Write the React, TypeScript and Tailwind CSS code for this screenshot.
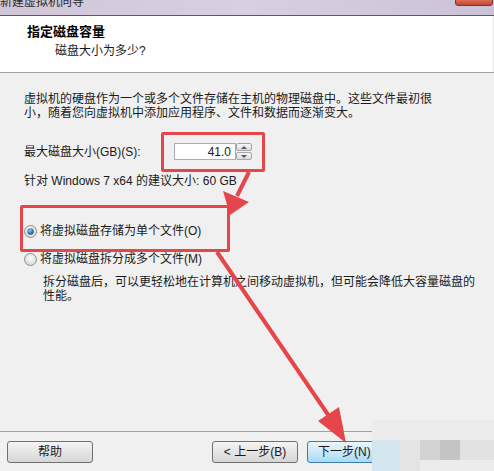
import React from "react";

const font = { fontFamily: '"Liberation Sans", "Noto Sans CJK SC", sans-serif' };

function Radio({ checked }: { checked: boolean }) {
  return (
    <svg width="13" height="13" viewBox="0 0 13 13" className="shrink-0">
      <defs>
        <radialGradient id={checked ? "rg1" : "rg0"} cx="50%" cy="40%" r="60%">
          <stop offset="0%" stopColor="#ffffff" />
          <stop offset="100%" stopColor="#d4d4d4" />
        </radialGradient>
        <radialGradient id="dot" cx="40%" cy="35%" r="70%">
          <stop offset="0%" stopColor="#8fd0f0" />
          <stop offset="60%" stopColor="#2a7fb0" />
          <stop offset="100%" stopColor="#0d4a70" />
        </radialGradient>
      </defs>
      <circle cx="6.5" cy="6.5" r="6" fill={checked ? "url(#rg1)" : "url(#rg0)"} stroke="#8f8f8f" />
      {checked && <circle cx="6.5" cy="6.5" r="3.2" fill="url(#dot)" />}
    </svg>
  );
}

export default function App() {
  return (
    <div
      className="relative w-[494px] h-[471px] overflow-hidden bg-[#f0f0f0] text-[12px] text-[#1a1a1a] flex flex-col"
      style={font}
    >
      {/* title bar */}
      <div className="relative h-[15px] shrink-0 bg-gradient-to-r from-[#cfc6d9] via-[#d8cfe0] to-[#cbc2d8] overflow-hidden">
        <div className="absolute left-0 top-[-6px] text-[12px] leading-[16px] text-[#2a2a2a] whitespace-nowrap">新建虚拟机向导</div>
        <div className="absolute right-[1px] top-[-6px] w-[38px] h-[12px] rounded-[3px] border border-[#7a3a2a] bg-gradient-to-b from-[#e8907a] to-[#c4452f]" />
      </div>
      <div className="h-[1px] shrink-0 bg-[#5b5868]" />
      {/* header */}
      <div className="h-[56px] shrink-0 bg-white pl-[27px] pt-[8px] border-r border-[#e8e8e8]">
        <div className="text-[13px] leading-[16px] font-bold text-black">指定磁盘容量</div>
        <div className="ml-[28px] mt-[3px] text-[12px] leading-[16px] text-[#1a1a1a]">磁盘大小为多少?</div>
      </div>
      <div className="h-[1px] shrink-0 bg-[#a0a0a0]" />
      {/* body */}
      <div className="flex-1 px-[24px] pt-[19px] flex flex-col whitespace-nowrap">
        <div className="leading-[14px]">
          <div>虚拟机的硬盘作为一个或多个文件存储在主机的物理磁盘中。这些文件最初很</div>
          <div>小，随着您向虚拟机中添加应用程序、文件和数据而逐渐变大。</div>
        </div>
        <div className="mt-[23px] flex items-center h-[17px]">
          <div className="w-[150px] leading-[14px]">最大磁盘大小(GB)(S):</div>
          <div className="flex h-[17px]">
            <div className="w-[62px] h-[17px] bg-white border border-[#abadb3] flex items-center justify-end pr-[4px] leading-[14px]">41.0</div>
            <div className="w-[16px] h-[17px] flex flex-col">
              <div className="h-[8px] border border-[#a6a6a6] rounded-[2px] bg-gradient-to-b from-[#f6f6f6] to-[#dcdcdc] flex items-center justify-center">
                <div className="w-0 h-0 border-l-[3px] border-r-[3px] border-b-[3px] border-l-transparent border-r-transparent border-b-[#4a5a70]" />
              </div>
              <div className="h-[8px] mt-[1px] border border-[#a6a6a6] rounded-[2px] bg-gradient-to-b from-[#f6f6f6] to-[#dcdcdc] flex items-center justify-center">
                <div className="w-0 h-0 border-l-[3px] border-r-[3px] border-t-[3px] border-l-transparent border-r-transparent border-t-[#4a5a70]" />
              </div>
            </div>
          </div>
        </div>
        <div className="mt-[14px] leading-[14px]">针对 Windows 7 x64 的建议大小: 60 GB</div>
        <div className="mt-[36px] flex items-center gap-[3px] h-[14px] leading-[14px]">
          <Radio checked />
          <span>将虚拟磁盘存储为单个文件(O)</span>
        </div>
        <div className="mt-[14px] flex items-center gap-[3px] h-[14px] leading-[14px]">
          <Radio checked={false} />
          <span>将虚拟磁盘拆分成多个文件(M)</span>
        </div>
        <div className="mt-[9px] ml-[19px] leading-[14px]">
          <div>拆分磁盘后，可以更轻松地在计算机之间移动虚拟机，但可能会降低大容量磁盘的</div>
          <div>性能。</div>
        </div>
      </div>
      {/* footer */}
      <div className="h-[1px] shrink-0 bg-[#a0a0a0]" />
      <div className="h-[39px] shrink-0 flex items-start pt-[9px] pl-[7px]">
        <button className="w-[86px] h-[22px] rounded-[3px] border border-[#707070] bg-gradient-to-b from-[#f4f4f4] to-[#d6d6d6] text-[12px] leading-[14px]">
          帮助
        </button>
        <button className="ml-[119px] w-[86px] h-[22px] rounded-[3px] border border-[#707070] bg-gradient-to-b from-[#f4f4f4] to-[#d6d6d6] text-[12px] leading-[14px]">
          &lt; 上一步(B)
        </button>
        <button className="ml-[9px] w-[86px] h-[22px] rounded-[3px] border border-[#3c7fb1] bg-gradient-to-b from-[#eaf6fd] to-[#a9daf5] text-[12px] leading-[14px] text-left pl-[10px]">
          下一步(N)
        </button>
      </div>

      {/* watermark blur blocks */}
      <div className="absolute left-[372px] top-[420px] w-[122px] h-[51px] bg-[#ececec]" />
      <div className="absolute left-[372px] top-[440px] w-[28px] h-[31px] bg-[#d3e6f0]" />
      <div className="absolute left-[400px] top-[440px] w-[20px] h-[31px] bg-[#e4e4e4]" />
      <div className="absolute left-[420px] top-[440px] w-[20px] h-[20px] bg-[#d2d2d2]" />
      <div className="absolute left-[440px] top-[440px] w-[20px] h-[20px] bg-[#c4c4c4]" />
      <div className="absolute left-[460px] top-[440px] w-[34px] h-[20px] bg-[#e2e2e2]" />

      {/* annotation boxes */}
      <div className="absolute left-[161px] top-[132px] w-[104px] h-[40px] border-[3px] border-[#e4464c] rounded-[2px]" />
      <div className="absolute left-[20px] top-[205px] w-[210px] h-[47px] border-[3px] border-[#e4464c] rounded-[2px]" />

      {/* arrows */}
      <svg className="absolute left-0 top-0 pointer-events-none" width="494" height="471">
        <line x1="249" y1="172" x2="237" y2="196" stroke="#e4464c" strokeWidth="4" />
        <polygon points="223,191 249,202 230,215" fill="#e4464c" />
        <line x1="217" y1="252" x2="331" y2="419" stroke="#e4464c" strokeWidth="4" />
        <polygon points="346,443 318,421 339,407" fill="#e4464c" />
      </svg>
    </div>
  );
}
